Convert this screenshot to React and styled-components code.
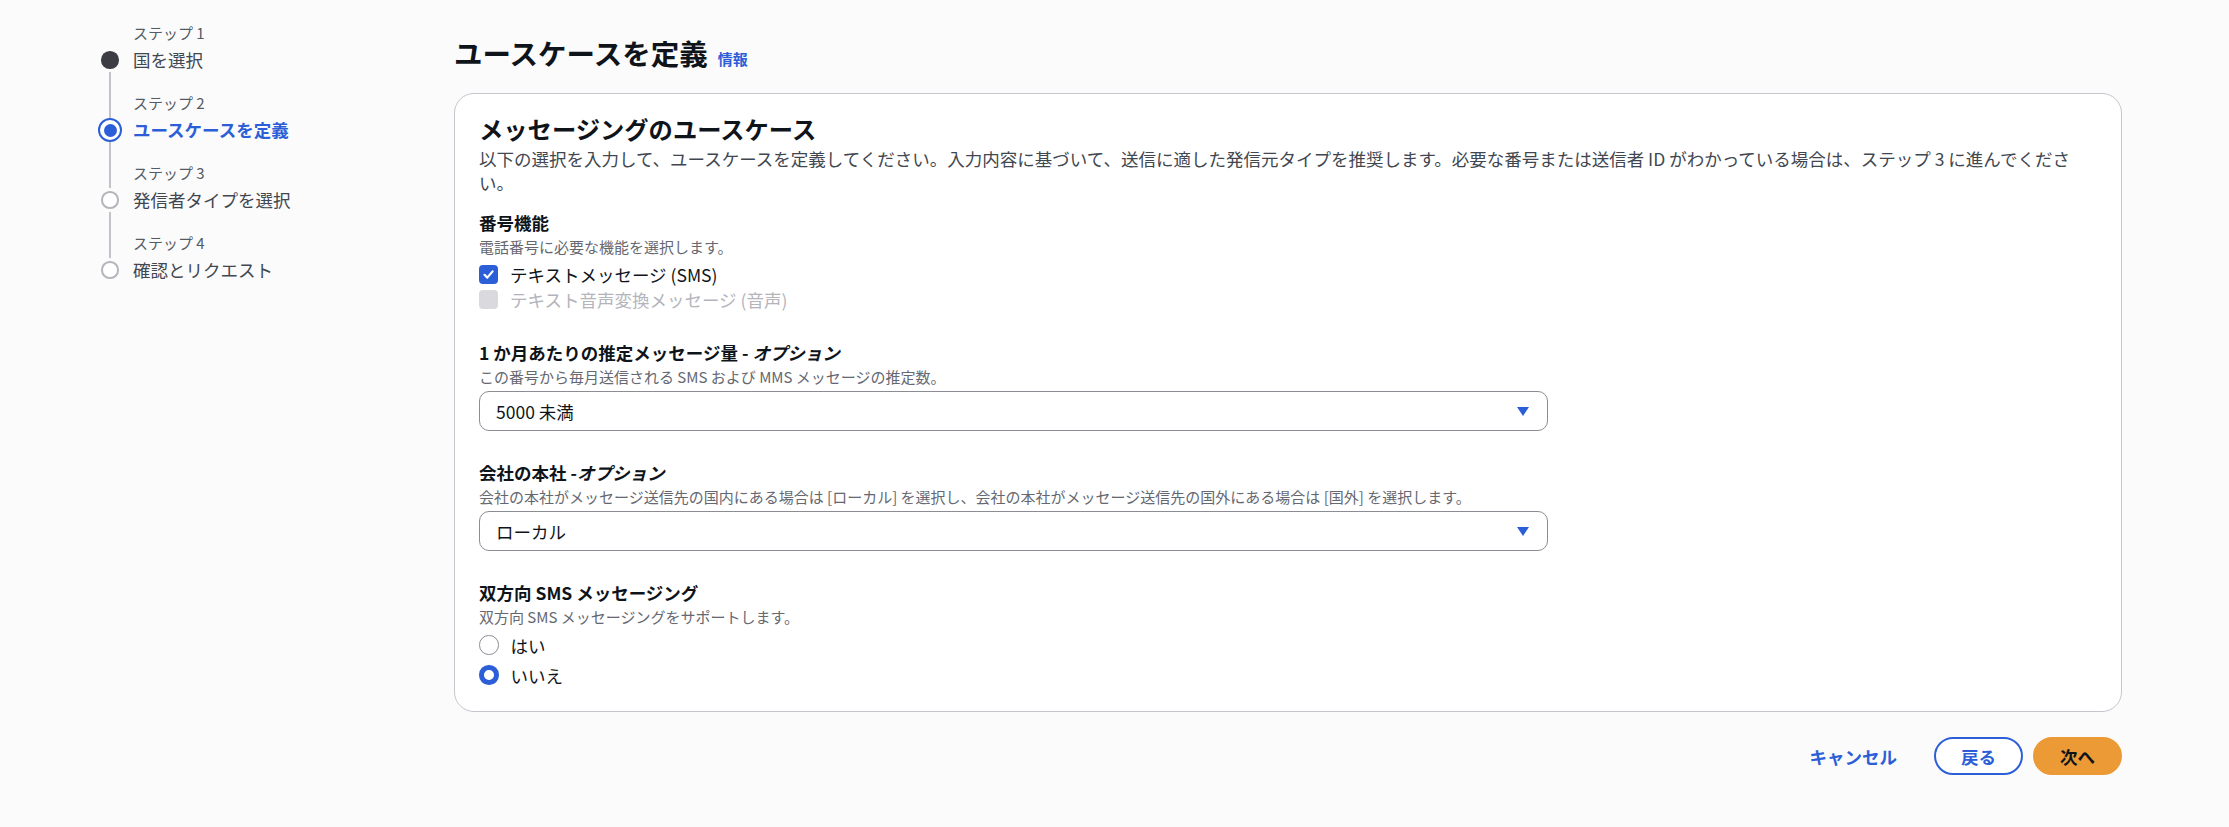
import React from "react";
import styled, { createGlobalStyle, css } from "styled-components";

const BLUE = "#2c5fd7";

const GlobalStyle = createGlobalStyle`
  html, body {
    margin: 0;
    padding: 0;
  }
  body {
    background: #fbfbfc;
    font-family: "Noto Sans CJK JP", "Noto Sans", sans-serif;
    color: #0f141a;
    -webkit-font-smoothing: antialiased;
  }
  * { box-sizing: border-box; }
`;

const Page = styled.div`
  display: flex;
  min-height: 827px;
`;

const Sidebar = styled.nav`
  width: 454px;
  flex-shrink: 0;
  padding: 23px 0 0 98px;
`;

const StepList = styled.ol`
  list-style: none;
  margin: 0;
  padding: 0;
`;

const Step = styled.li`
  display: flex;
  gap: 11px;
`;

const MarkerCol = styled.div`
  width: 24px;
  display: flex;
  flex-direction: column;
  align-items: center;
`;

const Line = styled.div`
  width: 2px;
  background: ${(p) => (p.$hidden ? "transparent" : "#c2c2c8")};
  ${(p) => (p.$grow ? css`flex: 1;` : css`height: 25px;`)}
`;

const MarkerBox = styled.div`
  width: 24px;
  height: 24px;
  display: flex;
  align-items: center;
  justify-content: center;
`;

const Dot = styled.span`
  display: block;
  border-radius: 50%;
  position: relative;
  ${(p) =>
    p.$state === "done" &&
    css`
      width: 17.5px;
      height: 17.5px;
      background: #3c3c45;
    `}
  ${(p) =>
    p.$state === "pending" &&
    css`
      width: 17.5px;
      height: 17.5px;
      background: #fff;
      border: 2px solid #b4b4bb;
    `}
  ${(p) =>
    p.$state === "active" &&
    css`
      width: 24px;
      height: 24px;
      background: #fff;
      border: 2.5px solid ${BLUE};
      &::after {
        content: "";
        position: absolute;
        left: 50%;
        top: 50%;
        width: 13px;
        height: 13px;
        margin: -6.5px 0 0 -6.5px;
        border-radius: 50%;
        background: ${BLUE};
      }
    `}
`;

const StepText = styled.div`
  display: flex;
  flex-direction: column;
  padding-bottom: ${(p) => (p.$last ? "0" : "21px")};
`;

const StepLabel = styled.span`
  font-size: 15px;
  line-height: 20px;
  color: #545b64;
`;

const StepTitle = styled.span`
  margin-top: 5px;
  font-size: 17.5px;
  line-height: 24px;
  color: ${(p) => (p.$active ? BLUE : "#414750")};
  font-weight: ${(p) => (p.$active ? 700 : 400)};
`;

const Main = styled.main`
  flex: 1;
  padding: 36px 107px 0 0;
`;

const Header = styled.div`
  display: flex;
  align-items: baseline;
  gap: 10px;
`;

const Title = styled.h1`
  margin: 0;
  font-size: 28.5px;
  line-height: 34px;
  font-weight: 700;
  color: #0f141a;
`;

const InfoLink = styled.a`
  font-size: 15px;
  font-weight: 700;
  color: ${BLUE};
  text-decoration: none;
`;

const Card = styled.section`
  margin-top: 23px;
  background: #fff;
  border: 1px solid #c6c6cd;
  border-radius: 20px;
  padding: 20px 24px 24px;
`;

const CardHeading = styled.h2`
  margin: 0;
  font-size: 24.3px;
  line-height: 29px;
  font-weight: 700;
`;

const CardDesc = styled.p`
  margin: 4px 0 0;
  font-size: 17.5px;
  line-height: 24px;
  color: #414750;
`;

const Form = styled.div`
  display: flex;
  flex-direction: column;
  gap: 30px;
  margin-top: 16px;
`;

const Field = styled.div`
  display: flex;
  flex-direction: column;
`;

const FieldLabel = styled.div`
  font-size: 17.5px;
  line-height: 24px;
  font-weight: 700;
  i {
    font-style: italic;
  }
`;

const FieldDesc = styled.div`
  margin-top: 2px;
  font-size: 15px;
  line-height: 20px;
  color: #656871;
`;

const OptionList = styled.div`
  display: flex;
  flex-direction: column;
  gap: ${(p) => p.$gap}px;
  margin-top: ${(p) => p.$top}px;
`;

const OptionRow = styled.label`
  display: flex;
  align-items: center;
  gap: 12px;
  height: 24px;
  font-size: 17.5px;
  color: ${(p) => (p.$disabled ? "#b4b4bb" : "#0f141a")};
`;

const CheckBox = styled.span`
  width: 19px;
  height: 19px;
  border-radius: 4px;
  background: ${(p) => (p.$disabled ? "#dadade" : BLUE)};
  display: flex;
  align-items: center;
  justify-content: center;
  flex-shrink: 0;
`;

const Radio = styled.span`
  width: 19.5px;
  height: 19.5px;
  border-radius: 50%;
  background: #fff;
  flex-shrink: 0;
  border: ${(p) => (p.$checked ? `5.5px solid ${BLUE}` : "1.5px solid #8c8c94")};
`;

const Select = styled.div`
  margin-top: 4px;
  width: 1069px;
  height: 40px;
  border: 1px solid #8c8c94;
  border-radius: 10px;
  background: #fff;
  padding: 0 18px 0 16px;
  display: flex;
  align-items: center;
  justify-content: space-between;
  font-size: 17.5px;
  color: #0f141a;
`;

const Footer = styled.div`
  display: flex;
  justify-content: flex-end;
  gap: 10px;
  margin-top: 25px;
`;

const Button = styled.button`
  height: 38px;
  padding: 0 25px;
  border-radius: 20px;
  border: 2px solid transparent;
  font-family: inherit;
  font-size: 17.5px;
  font-weight: 700;
  display: inline-flex;
  align-items: center;
  cursor: pointer;
  ${(p) =>
    p.$variant === "link" &&
    css`
      background: transparent;
      color: ${BLUE};
    `}
  ${(p) =>
    p.$variant === "normal" &&
    css`
      background: #fff;
      border-color: ${BLUE};
      color: ${BLUE};
    `}
  ${(p) =>
    p.$variant === "primary" &&
    css`
      background: #eb9a35;
      border-color: #eb9a35;
      color: #0f141a;
    `}
`;

const Caret = () => (
  <svg width="12" height="9" viewBox="0 0 12 9">
    <polygon points="0,0 12,0 6,9" fill={BLUE} />
  </svg>
);

const Check = () => (
  <svg width="13" height="13" viewBox="0 0 13 13">
    <polyline
      points="2.5,6.8 5.3,9.6 10.6,3.4"
      fill="none"
      stroke="#fff"
      strokeWidth="2.2"
      strokeLinecap="round"
      strokeLinejoin="round"
    />
  </svg>
);

const steps = [
  { label: "ステップ 1", title: "国を選択", state: "done" },
  { label: "ステップ 2", title: "ユースケースを定義", state: "active" },
  { label: "ステップ 3", title: "発信者タイプを選択", state: "pending" },
  { label: "ステップ 4", title: "確認とリクエスト", state: "pending" },
];

export default function App() {
  return (
    <>
      <GlobalStyle />
      <Page>
        <Sidebar>
          <StepList>
            {steps.map((s, i) => (
              <Step key={s.label}>
                <MarkerCol>
                  <Line $hidden={i === 0} />
                  <MarkerBox>
                    <Dot $state={s.state} />
                  </MarkerBox>
                  <Line $grow $hidden={i === steps.length - 1} />
                </MarkerCol>
                <StepText $last={i === steps.length - 1}>
                  <StepLabel>{s.label}</StepLabel>
                  <StepTitle $active={s.state === "active"}>{s.title}</StepTitle>
                </StepText>
              </Step>
            ))}
          </StepList>
        </Sidebar>
        <Main>
          <Header>
            <Title>ユースケースを定義</Title>
            <InfoLink href="#">情報</InfoLink>
          </Header>
          <Card>
            <CardHeading>メッセージングのユースケース</CardHeading>
            <CardDesc>
              以下の選択を入力して、ユースケースを定義してください。入力内容に基づいて、送信に適した発信元タイプを推奨します。必要な番号または送信者 ID がわかっている場合は、ステップ 3 に進んでください。
            </CardDesc>
            <Form>
              <Field>
                <FieldLabel>番号機能</FieldLabel>
                <FieldDesc>電話番号に必要な機能を選択します。</FieldDesc>
                <OptionList $gap={1} $top={5}>
                  <OptionRow>
                    <CheckBox>
                      <Check />
                    </CheckBox>
                    テキストメッセージ (SMS)
                  </OptionRow>
                  <OptionRow $disabled>
                    <CheckBox $disabled />
                    テキスト音声変換メッセージ (音声)
                  </OptionRow>
                </OptionList>
              </Field>
              <Field>
                <FieldLabel>
                  1 か月あたりの推定メッセージ量 - <i>オプション</i>
                </FieldLabel>
                <FieldDesc>この番号から毎月送信される SMS および MMS メッセージの推定数。</FieldDesc>
                <Select>
                  <span>5000 未満</span>
                  <Caret />
                </Select>
              </Field>
              <Field>
                <FieldLabel>
                  会社の本社 -<i>オプション</i>
                </FieldLabel>
                <FieldDesc>
                  会社の本社がメッセージ送信先の国内にある場合は [ローカル] を選択し、会社の本社がメッセージ送信先の国外にある場合は [国外] を選択します。
                </FieldDesc>
                <Select>
                  <span>ローカル</span>
                  <Caret />
                </Select>
              </Field>
              <Field>
                <FieldLabel>双方向 SMS メッセージング</FieldLabel>
                <FieldDesc>双方向 SMS メッセージングをサポートします。</FieldDesc>
                <OptionList $gap={6} $top={6}>
                  <OptionRow>
                    <Radio />
                    はい
                  </OptionRow>
                  <OptionRow>
                    <Radio $checked />
                    いいえ
                  </OptionRow>
                </OptionList>
              </Field>
            </Form>
          </Card>
          <Footer>
            <Button $variant="link">キャンセル</Button>
            <Button $variant="normal">戻る</Button>
            <Button $variant="primary">次へ</Button>
          </Footer>
        </Main>
      </Page>
    </>
  );
}
